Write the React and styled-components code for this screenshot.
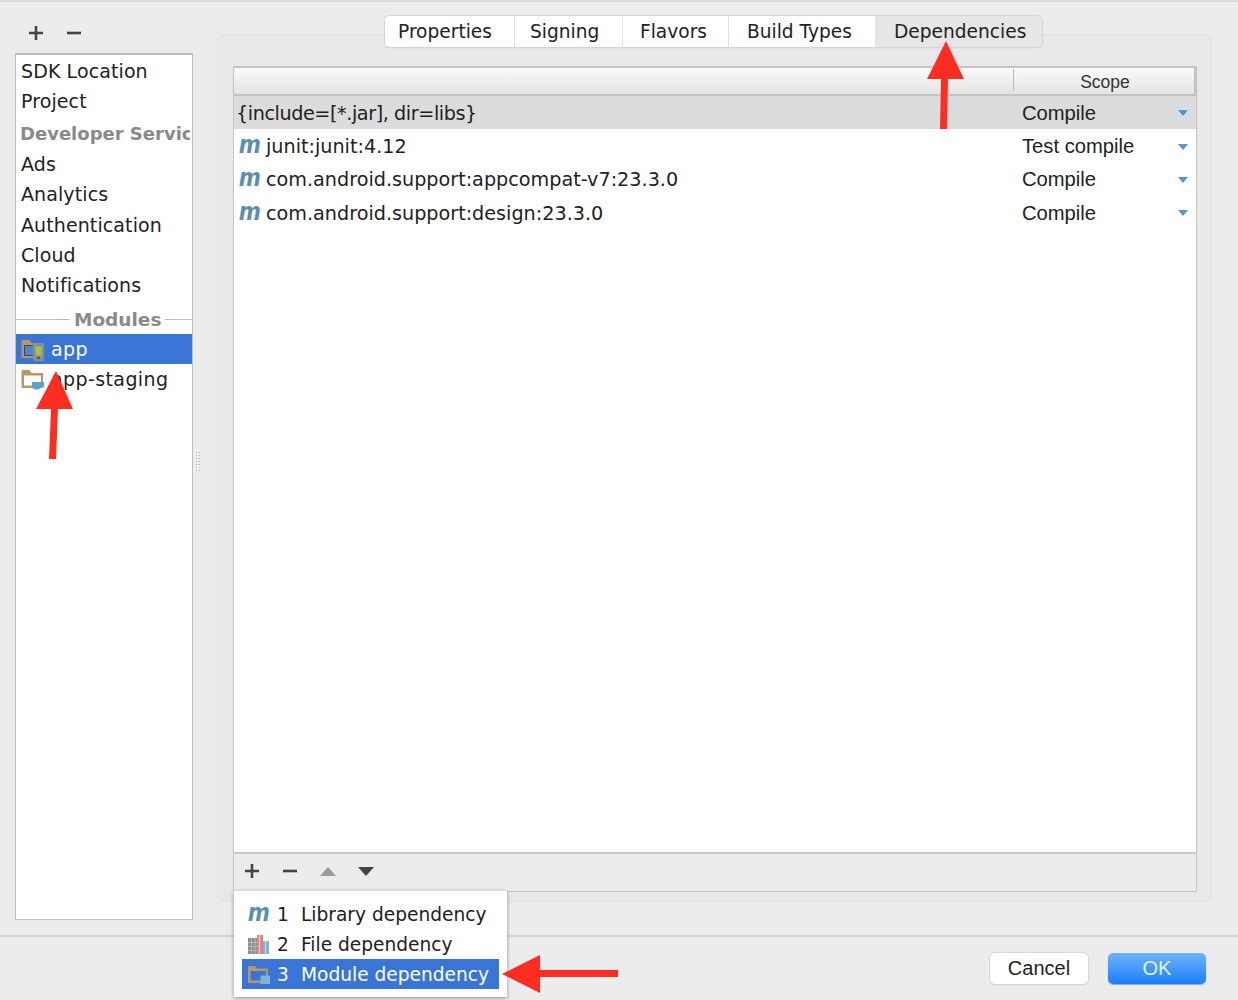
import React from 'react';
import styled, { createGlobalStyle } from 'styled-components';

const GlobalStyle = createGlobalStyle`
  html, body { margin: 0; padding: 0; background: #ececec; }
  body { font-family: "DejaVu Sans", sans-serif; color: #222; }
`;

const Dialog = styled.div`
  position: relative;
  width: 1238px;
  height: 1000px;
  display: flex;
  flex-direction: column;
  background: #ececec;
  border-top: 2px solid #d9d9d9;
  box-sizing: border-box;
  overflow: hidden;
`;

const Body = styled.div`
  flex: 1;
  display: flex;
  padding: 13px 26px 0 15px;
  min-height: 0;
`;

const LeftColumn = styled.div`
  width: 178px;
  flex: none;
  display: flex;
  flex-direction: column;
  padding-bottom: 15px;
`;

const TopActions = styled.div`
  height: 38px;
  display: flex;
  align-items: center;
  gap: 20px;
  padding: 0 0 2px 12px;
  box-sizing: border-box;
`;

const SideList = styled.div`
  flex: 1;
  background: #fff;
  border: 1px solid #bdbdbd;
  border-top-width: 2px;
  padding-top: 0.6px;
  overflow: hidden;
  font-size: 19px;
  letter-spacing: 0.1px;
`;

const SideItem = styled.div`
  height: 30.3px;
  line-height: 30px;
  padding-left: 5px;
  white-space: nowrap;
  color: #222;
`;

const SideGroup = styled.div`
  height: 30px;
  line-height: 30px;
  padding: 3px 0 0 4px;
  margin-right: 2px;
  font-weight: bold;
  font-size: 18px;
  letter-spacing: 0;
  white-space: nowrap;
  color: #8a8a8a;
  overflow: hidden;
`;

const SideSeparator = styled.div`
  display: flex;
  align-items: center;
  height: 28px;
  padding-top: 5px;
  gap: 4px;
  font-weight: bold;
  font-size: 18.5px;
  letter-spacing: 0;
  color: #8a8a8a;
  &::before, &::after {
    content: "";
    height: 1px;
    background: #bdbdbd;
  }
  &::before { width: 54px; }
  &::after { flex: 1; }
`;

const ModuleItem = styled.div`
  height: 30.5px;
  display: flex;
  align-items: center;
  gap: 6px;
  padding-left: 5px;
  letter-spacing: 0.4px;
  background: ${p => (p.$selected ? '#3875d7' : 'transparent')};
  color: ${p => (p.$selected ? '#fff' : '#222')};
`;

const Splitter = styled.div`
  width: 24px;
  flex: none;
  display: flex;
  align-items: center;
  padding-bottom: 34px;
  box-sizing: border-box;
`;

const Grip = styled.div`
  width: 6px;
  height: 22px;
  margin: 8px 0 0 2px;
  background-image: radial-gradient(circle, #b5b5b5 1px, transparent 1px);
  background-size: 3px 3px;
`;

const RightColumn = styled.div`
  flex: 1;
  display: flex;
  flex-direction: column;
  align-items: stretch;
  padding-bottom: 33px;
  min-width: 0;
`;

const TabBar = styled.div`
  align-self: flex-start;
  margin: 1px 0 -13px 168px;
  height: 31px;
  display: flex;
  background: #fff;
  border-radius: 5px;
  box-shadow: 0 0 0 1px #d4d4d4, 0 1px 1px #bbb;
  overflow: hidden;
  position: relative;
  z-index: 1;
`;

const Tab = styled.div`
  width: ${p => p.$w}px;
  box-sizing: border-box;
  display: flex;
  align-items: center;
  padding-left: ${p => p.$pad}px;
  font-size: 18.6px;
  background: ${p => (p.$active ? '#e6e6e6' : '#fff')};
  border-right: ${p => (p.$active ? 'none' : '1px solid #e2e2e2')};
  color: #222;
`;

const Panel = styled.div`
  flex: 1;
  display: flex;
  min-height: 0;
  padding: 31px 14px 9px 15px;
  background: #e8e8e8;
  border: 1px solid #e3e3e3;
  border-radius: 6px;
`;

const TableFrame = styled.div`
  flex: 1;
  display: flex;
  flex-direction: column;
  min-width: 0;
  border: 1px solid #c4c4c4;
  border-top-width: 2px;
`;

const HeaderRow = styled.div`
  height: 26px;
  flex: none;
  display: flex;
  background: linear-gradient(#fafafa, #e4e4e4);
  border-bottom: 2px solid #c4c4c4;
`;

const HeaderBlank = styled.div`
  width: 779px;
  border-right: 1px solid #b8b8b8;
  margin: 1px 0 3px;
`;

const HeaderScope = styled.div`
  flex: 1;
  display: flex;
  align-items: center;
  justify-content: center;
  padding: 3px 0 0 2px;
  font-family: "Liberation Sans", sans-serif;
  font-size: 17.5px;
  color: #333;
  border-right: 2px solid #c4c4c4;
`;

const Rows = styled.div`
  flex: 1;
  background: #fff;
`;

const Row = styled.div`
  height: 33.4px;
  display: flex;
  align-items: center;
  background: ${p => (p.$selected ? '#dcdcdc' : '#fff')};
`;

const RowName = styled.div`
  width: 788px;
  flex: none;
  display: flex;
  align-items: center;
  gap: 7px;
  padding: 1px 0 0 2px;
  box-sizing: border-box;
  font-size: 19.2px;
  letter-spacing: ${p => (p.$plain ? '-0.42px' : '0')};
  white-space: nowrap;
  color: #222;
`;

const RowScope = styled.div`
  flex: 1;
  display: flex;
  align-items: center;
  justify-content: space-between;
  padding: 1px 8px 0 0;
  font-family: "Liberation Sans", sans-serif;
  font-size: 20.2px;
  color: #222;
`;

const Caret = styled.span`
  width: 0;
  height: 0;
  border-left: 5.5px solid transparent;
  border-right: 5.5px solid transparent;
  border-top: 6px solid #4b9ccb;
`;

const Toolbar = styled.div`
  height: 39px;
  flex: none;
  display: flex;
  align-items: center;
  gap: 20px;
  padding: 0 0 3px 9px;
  box-sizing: border-box;
  background: #ececec;
  border-top: 2px solid #c8c8c8;
`;

const ToolButton = styled.span`
  width: 18px;
  height: 18px;
  flex: none;
  display: flex;
  align-items: center;
  justify-content: center;
`;

const ModuleGlyph = styled.span`
  width: 22px;
  flex: none;
  margin: -3px 0 0 -1px;
  font-family: "DejaVu Sans", sans-serif;
  font-style: italic;
  font-weight: bold;
  font-size: 25px;
  line-height: 20px;
  text-align: center;
  color: #5a90ae;
  transform: scaleX(0.85);
`;

const RowGlyph = styled(ModuleGlyph)`
  margin-left: 1px;
`;

const Footer = styled.div`
  height: 65px;
  flex: none;
  display: flex;
  justify-content: flex-end;
  gap: 20px;
  padding: 16px 32px 0 0;
  box-sizing: border-box;
  border-top: 2px solid #d4d4d4;
`;

const Button = styled.div`
  width: 98px;
  height: 31px;
  display: flex;
  align-items: center;
  justify-content: center;
  box-sizing: border-box;
  border-radius: 5px;
  font-family: "Liberation Sans", sans-serif;
  font-size: 20px;
  color: ${p => (p.$primary ? '#e6f1ff' : '#222')};
  background: ${p => (p.$primary ? 'linear-gradient(#6cb3fa, #1a7ffb)' : '#fff')};
  box-shadow: ${p => (p.$primary ? '0 1px 1px #9ab' : '0 0 0 1px #d6d6d6, 0 1px 1px #bbb')};
`;

const PopupMenu = styled.div`
  position: absolute;
  left: 234px;
  top: 889px;
  width: 273px;
  height: 106px;
  box-sizing: border-box;
  padding: 8px 8px 0;
  background: #fff;
  box-shadow: 0 1px 4px rgba(0, 0, 0, 0.4);
  font-size: 18.6px;
  z-index: 2;
`;

const MenuItem = styled.div`
  height: 30px;
  display: flex;
  align-items: center;
  padding-left: 5px;
  white-space: nowrap;
  background: ${p => (p.$selected ? '#3875d7' : 'transparent')};
  color: ${p => (p.$selected ? '#fff' : '#222')};
`;

const MenuIcon = styled.span`
  width: 24px;
  flex: none;
  display: flex;
  align-items: center;
  margin-right: 6px;
`;

const MenuKey = styled.span`
  width: 24px;
  flex: none;
`;

const Overlay = styled.svg`
  position: absolute;
  left: 0;
  top: -2px;
  width: 1238px;
  height: 1000px;
  pointer-events: none;
  z-index: 3;
`;

const Plus = ({ color = '#444' }) => (
  <svg width="18" height="18" viewBox="0 0 18 18">
    <path d="M9 2v14M2 9h14" stroke={color} strokeWidth="2.6" />
  </svg>
);

const Minus = ({ color = '#444' }) => (
  <svg width="18" height="18" viewBox="0 0 18 18">
    <path d="M2 9h14" stroke={color} strokeWidth="2.6" />
  </svg>
);

const Triangle = ({ down, color }) => (
  <svg width="18" height="18" viewBox="0 0 18 18">
    <path d={down ? 'M1 5h16l-8 9z' : 'M1 14h16L9 5z'} fill={color} />
  </svg>
);

const FolderShape = () => (
  <path
    d="M0.500 3h8l2 3H22v15H0.500z M3 8.500v10h17v-10z"
    fill="#bb9664"
    fillRule="evenodd"
  />
);

const AndroidFolder = () => (
  <svg width="24" height="24" viewBox="0 0 24 24" style={{ flex: 'none' }}>
    <FolderShape />
    <rect x="3.500" y="8.500" width="9" height="10" fill="#4d86cf" stroke="#33486a" strokeWidth="1" />
    <rect x="12" y="6" width="11" height="18" rx="1.500" fill="#8e8e8e" />
    <rect x="14.500" y="9.500" width="6" height="9" fill="#a4c639" />
    <rect x="16" y="20" width="3" height="2" fill="#555" />
  </svg>
);

const JavaFolder = () => (
  <svg width="24" height="24" viewBox="0 0 24 24" style={{ flex: 'none' }}>
    <FolderShape />
    <path d="M11 15h9v3.500a4 4 0 0 1-4 4h-1a4 4 0 0 1-4-4z" fill="#4fa3d8" />
    <path d="M20 16h2.500v3H20" fill="none" stroke="#4fa3d8" strokeWidth="1.400" />
  </svg>
);

const PlainFolder = () => (
  <svg width="24" height="20" viewBox="0 0 24 20">
    <path
      d="M1 2h7l2 2.500H21V19H1z M3.500 7v9.500H19V7z"
      fill="#bb9664"
      fillRule="evenodd"
    />
    <rect x="13.500" y="11.500" width="9.500" height="8.500" fill="#7fb2d6" />
  </svg>
);

const Books = () => (
  <svg width="24" height="20" viewBox="0 0 24 20">
    <rect x="1" y="4" width="10" height="16" fill="#8d8d8d" />
    <path d="M1 8.500h10M1 12.500h10M1 16.500h10M4.500 4v16M8 4v16" stroke="#b9b9b9" strokeWidth="1" />
    <rect x="10" y="1" width="6" height="19" fill="#e0837a" />
    <path d="M12.500 1v19" stroke="#f2c1bc" strokeWidth="1.500" />
    <rect x="16" y="7" width="6" height="13" fill="#7db4dc" />
    <path d="M18.500 7v13" stroke="#c3dff2" strokeWidth="1" />
  </svg>
);

const sidebarTop = ['SDK Location', 'Project'];
const sidebarServices = ['Ads', 'Analytics', 'Authentication', 'Cloud', 'Notifications'];
const tabs = [
  { label: 'Properties', w: 130, pad: 13 },
  { label: 'Signing', w: 108, pad: 15 },
  { label: 'Flavors', w: 106, pad: 17 },
  { label: 'Build Types', w: 147, pad: 18 },
  { label: 'Dependencies', w: 166, pad: 18, active: true },
];
const dependencies = [
  { name: '{include=[*.jar], dir=libs}', scope: 'Compile', selected: true, plain: true },
  { name: 'junit:junit:4.12', scope: 'Test compile' },
  { name: 'com.android.support:appcompat-v7:23.3.0', scope: 'Compile' },
  { name: 'com.android.support:design:23.3.0', scope: 'Compile' },
];

export default function App() {
  return (
    <Dialog>
      <GlobalStyle />
      <Body>
        <LeftColumn>
          <TopActions>
            <ToolButton><Plus /></ToolButton>
            <ToolButton><Minus /></ToolButton>
          </TopActions>
          <SideList>
            {sidebarTop.map(item => <SideItem key={item}>{item}</SideItem>)}
            <SideGroup>Developer Services</SideGroup>
            {sidebarServices.map(item => <SideItem key={item}>{item}</SideItem>)}
            <SideSeparator>Modules</SideSeparator>
            <ModuleItem $selected><AndroidFolder />app</ModuleItem>
            <ModuleItem><JavaFolder />app-staging</ModuleItem>
          </SideList>
        </LeftColumn>
        <Splitter><Grip /></Splitter>
        <RightColumn>
          <TabBar>
            {tabs.map(tab => (
              <Tab key={tab.label} $w={tab.w} $pad={tab.pad} $active={tab.active}>{tab.label}</Tab>
            ))}
          </TabBar>
          <Panel>
            <TableFrame>
              <HeaderRow>
                <HeaderBlank />
                <HeaderScope>Scope</HeaderScope>
              </HeaderRow>
              <Rows>
                {dependencies.map(dep => (
                  <Row key={dep.name} $selected={dep.selected}>
                    <RowName $plain={dep.plain}>
                      {!dep.plain && <RowGlyph>m</RowGlyph>}
                      {dep.name}
                    </RowName>
                    <RowScope>{dep.scope}<Caret /></RowScope>
                  </Row>
                ))}
              </Rows>
              <Toolbar>
                <ToolButton><Plus /></ToolButton>
                <ToolButton><Minus /></ToolButton>
                <ToolButton><Triangle color="#9a9a9a" /></ToolButton>
                <ToolButton><Triangle down color="#444" /></ToolButton>
              </Toolbar>
            </TableFrame>
          </Panel>
        </RightColumn>
      </Body>
      <Footer>
        <Button>Cancel</Button>
        <Button $primary>OK</Button>
      </Footer>
      <PopupMenu>
        <MenuItem>
          <MenuIcon><ModuleGlyph>m</ModuleGlyph></MenuIcon>
          <MenuKey>1</MenuKey>Library dependency
        </MenuItem>
        <MenuItem>
          <MenuIcon><Books /></MenuIcon>
          <MenuKey>2</MenuKey>File dependency
        </MenuItem>
        <MenuItem $selected>
          <MenuIcon><PlainFolder /></MenuIcon>
          <MenuKey>3</MenuKey>Module dependency
        </MenuItem>
      </PopupMenu>
      <Overlay viewBox="0 0 1238 1000">
        <path d="M946 41L964 79H948L947 129H940L941 79H927z" fill="#ff2d1f" />
        <path d="M56 371L73 409H58L56 459H49L51 409H36z" fill="#ff2d1f" />
        <path d="M502 974L540 955V970H618V977H540V993z" fill="#ff2d1f" />
      </Overlay>
    </Dialog>
  );
}
